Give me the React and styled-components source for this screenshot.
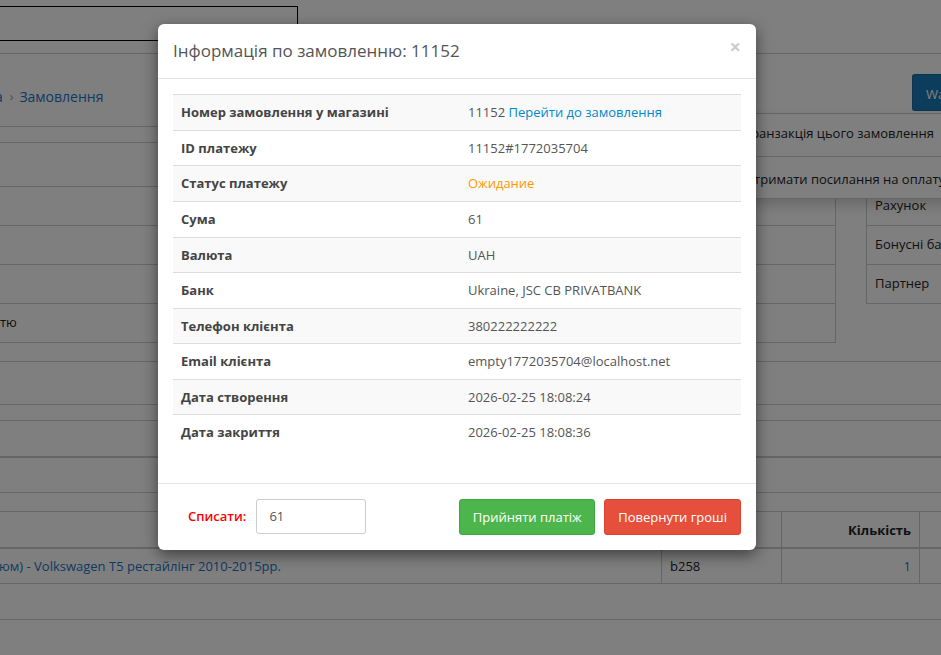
import React from 'react'
import styled, { createGlobalStyle } from 'styled-components'

const GlobalStyle = createGlobalStyle`
  html, body {
    margin: 0;
    padding: 0;
    height: 100%;
    overflow: hidden;
    background: #fff;
    font-family: "Open Sans", "Liberation Sans", sans-serif;
    font-size: 13px;
    color: #222;
  }
  * { box-sizing: border-box; }
`

const Page = styled.div`
  position: relative;
  width: 941px;
  height: 655px;
  overflow: hidden;
`

const TopBar = styled.header`
  height: 54px;
  padding-top: 6px;
  border-bottom: 1px solid #ccc;
`

const SearchBox = styled.div`
  width: 298px;
  height: 35px;
  border: 1px solid #000;
  border-left: 0;
`

const Crumbs = styled.div`
  height: 73px;
  padding-top: 33px;
  display: flex;
  justify-content: space-between;
  border-bottom: 1px solid #ccc;
  font-size: 14px;
  line-height: 20px;
`

const CrumbTrail = styled.div`
  display: flex;
  gap: 5px;
  margin-left: -5px;
  color: #1c74c4;
`

const CrumbArrow = styled.span`
  color: #999;
  font-size: 12px;
  margin: 0 1px 0 2px;
`

const SaveButton = styled.div`
  width: 29px;
  height: 37px;
  margin-top: -13px;
  padding: 9px 0 0 13px;
  background: #1a7ab8;
  border: 1px solid #166a9f;
  border-right: 0;
  border-radius: 3px 0 0 3px;
  color: #fff;
  font-size: 13px;
  overflow: hidden;
  white-space: nowrap;
`

const Strip = styled.div`
  height: ${p => p.$h}px;
  border-bottom: ${p => p.$thick || 1}px solid #ccc;
`

const Columns = styled.div`
  display: flex;
  height: 200px;
  align-items: flex-start;
`

const InfoTable = styled.div`
  width: 836px;
  border-right: 1px solid #ccc;
`

const InfoRow = styled.div`
  height: ${p => p.$h || 39}px;
  padding-top: 8px;
  line-height: 20px;
  border-bottom: 1px solid #ccc;
`

const SideTable = styled.div`
  width: 75px;
  margin-left: 30px;
  border-left: 1px solid #ccc;
`

const SideRow = styled.div`
  height: ${p => p.$h || 39}px;
  padding: 9px 0 0 8px;
  line-height: 18px;
  border-bottom: 1px solid #ccc;
  white-space: nowrap;
`

const Dropdown = styled.div`
  position: absolute;
  left: 700px;
  top: 113px;
  width: 260px;
  height: 86px;
  background: #fff;
  border-top: 1px solid #ccc;
  border-bottom: 1px solid #ccc;
  box-shadow: 0 6px 12px rgba(0, 0, 0, 0.18);
`

const DropItem = styled.div`
  height: 42px;
  padding-top: ${p => p.$top}px;
  padding-left: 44px;
  line-height: 20px;
  white-space: nowrap;
  & + & { border-top: 1px solid #ccc; }
`

const OrderHead = styled.div`
  display: grid;
  grid-template-columns: 662px 120px 138px 1fr;
  height: 37px;
  border-bottom: 2px solid #ccc;
`

const OrderRow = styled.div`
  display: grid;
  grid-template-columns: 662px 120px 138px 1fr;
  height: 35px;
  border-bottom: 1px solid #ccc;
`

const OrderCell = styled.div`
  display: flex;
  align-items: center;
  justify-content: ${p => (p.$right ? 'flex-end' : 'flex-start')};
  border-right: 1px solid #ccc;
  padding: 0 8px 0 ${p => (p.$flush ? 0 : 8)}px;
  margin-left: ${p => (p.$flush ? -1 : 0)}px;
  font-weight: ${p => (p.$bold ? 700 : 400)};
  color: ${p => (p.$link ? '#1c74c4' : 'inherit')};
  white-space: nowrap;
  &:last-child { border-right: 0; }
`

const Backdrop = styled.div`
  position: absolute;
  inset: 0;
  background: rgba(0, 0, 0, 0.5);
  padding: 24px 0 0 158px;
`

const Modal = styled.div`
  width: 598px;
  height: 526px;
  background: #fff;
  border-radius: 6px;
  box-shadow: 0 5px 15px rgba(0, 0, 0, 0.5);
  display: flex;
  flex-direction: column;
`

const ModalHeader = styled.div`
  height: 55px;
  padding: 0 15px 2px;
  display: flex;
  align-items: center;
  justify-content: space-between;
  border-bottom: 1px solid #e5e5e5;
`

const ModalTitle = styled.h4`
  margin: 0;
  font-size: 17px;
  font-weight: 400;
  color: #555;
`

const CloseMark = styled.span`
  font-size: 20px;
  font-weight: 700;
  color: #ccc;
  margin: -8px 0 0 0;
`

const ModalBody = styled.div`
  flex: 1;
  padding: 15px;
`

const DetailRow = styled.div`
  display: grid;
  grid-template-columns: 287px 1fr;
  height: ${p => p.$h}px;
  padding: 8px 0 0 8px;
  line-height: 18px;
  background: ${p => (p.$odd ? '#f9f9f9' : '#fff')};
  border-top: 1px solid #ddd;
  color: #555;
`

const DetailLabel = styled.div`
  font-weight: 700;
  color: #444;
`

const Pay = styled.span`
  color: #0088cc;
`

const Status = styled.span`
  color: #ff9800;
`

const ModalFooter = styled.div`
  height: 67px;
  padding: 15px 15px 0 30px;
  display: flex;
  align-items: flex-start;
  border-top: 1px solid #e5e5e5;
`

const WriteOff = styled.label`
  color: #f00;
  font-weight: 600;
  line-height: 34px;
  margin-right: 10px;
`

const AmountInput = styled.div`
  width: 110px;
  height: 35px;
  padding: 0 12px;
  line-height: 33px;
  border: 1px solid #ccc;
  border-radius: 3px;
  color: #555;
`

const Action = styled.button`
  height: 36px;
  margin-left: ${p => p.$ml}px;
  width: ${p => p.$w}px;
  padding: 0;
  font: inherit;
  color: #fff;
  background: ${p => p.$bg};
  border: 1px solid ${p => p.$border};
  border-radius: 3px;
`

const details = [
  { label: 'ID платежу', value: '11152#1772035704', h: 35 },
  { label: 'Статус платежу', value: <Status>Ожидание</Status>, h: 36, odd: true },
  { label: 'Сума', value: '61', h: 36 },
  { label: 'Валюта', value: 'UAH', h: 35, odd: true },
  { label: 'Банк', value: 'Ukraine, JSC CB PRIVATBANK', h: 36 },
  { label: 'Телефон клієнта', value: '380222222222', h: 35, odd: true },
  { label: 'Email клієнта', value: 'empty1772035704@localhost.net', h: 36 },
  { label: 'Дата створення', value: '2026-02-25 18:08:24', h: 35, odd: true },
  { label: 'Дата закриття', value: '2026-02-25 18:08:36', h: 36 },
]

export default function App() {
  return (
    <Page>
      <GlobalStyle />
      <TopBar><SearchBox /></TopBar>
      <Crumbs>
        <CrumbTrail>а<CrumbArrow>›</CrumbArrow>Замовлення</CrumbTrail>
        <SaveButton>Wa</SaveButton>
      </Crumbs>
      <Strip $h={16} />
      <Columns>
        <InfoTable>
          <InfoRow $h={44} />
          <InfoRow />
          <InfoRow />
          <InfoRow />
          <InfoRow>тю</InfoRow>
        </InfoTable>
        <SideTable>
          <SideRow $h={44} />
          <SideRow>Рахунок</SideRow>
          <SideRow>Бонусні бали</SideRow>
          <SideRow>Партнер</SideRow>
        </SideTable>
      </Columns>
      <Strip $h={19} />
      <Strip $h={43} />
      <Strip $h={16} />
      <Strip $h={37} $thick={2} />
      <Strip $h={35} />
      <Strip $h={19} />
      <OrderHead>
        <OrderCell />
        <OrderCell />
        <OrderCell $right $bold>Кількість</OrderCell>
        <OrderCell />
      </OrderHead>
      <OrderRow>
        <OrderCell $flush $link>юм) - Volkswagen T5 рестайлінг 2010-2015рр.</OrderCell>
        <OrderCell>b258</OrderCell>
        <OrderCell $right $link>1</OrderCell>
        <OrderCell />
      </OrderRow>
      <Strip $h={36} />
      <Dropdown>
        <DropItem $top={9}>Транзакція цього замовлення</DropItem>
        <DropItem $top={12}>Отримати посилання на оплату</DropItem>
      </Dropdown>
      <Backdrop>
        <Modal>
          <ModalHeader>
            <ModalTitle>Інформація по замовленню: 11152</ModalTitle>
            <CloseMark>×</CloseMark>
          </ModalHeader>
          <ModalBody>
            <DetailRow $h={36} $odd>
              <DetailLabel>Номер замовлення у магазині</DetailLabel>
              <div>11152 <Pay>Перейти до замовлення</Pay></div>
            </DetailRow>
            {details.map(d => (
              <DetailRow key={d.label} $h={d.h} $odd={d.odd}>
                <DetailLabel>{d.label}</DetailLabel>
                <div>{d.value}</div>
              </DetailRow>
            ))}
          </ModalBody>
          <ModalFooter>
            <WriteOff>Списати:</WriteOff>
            <AmountInput>61</AmountInput>
            <Action $ml={93} $w={136} $bg="#4cb64c" $border="#3ea83e">Прийняти платіж</Action>
            <Action $ml={9} $w={137} $bg="#e74f3d" $border="#d9432f">Повернути гроші</Action>
          </ModalFooter>
        </Modal>
      </Backdrop>
    </Page>
  )
}
